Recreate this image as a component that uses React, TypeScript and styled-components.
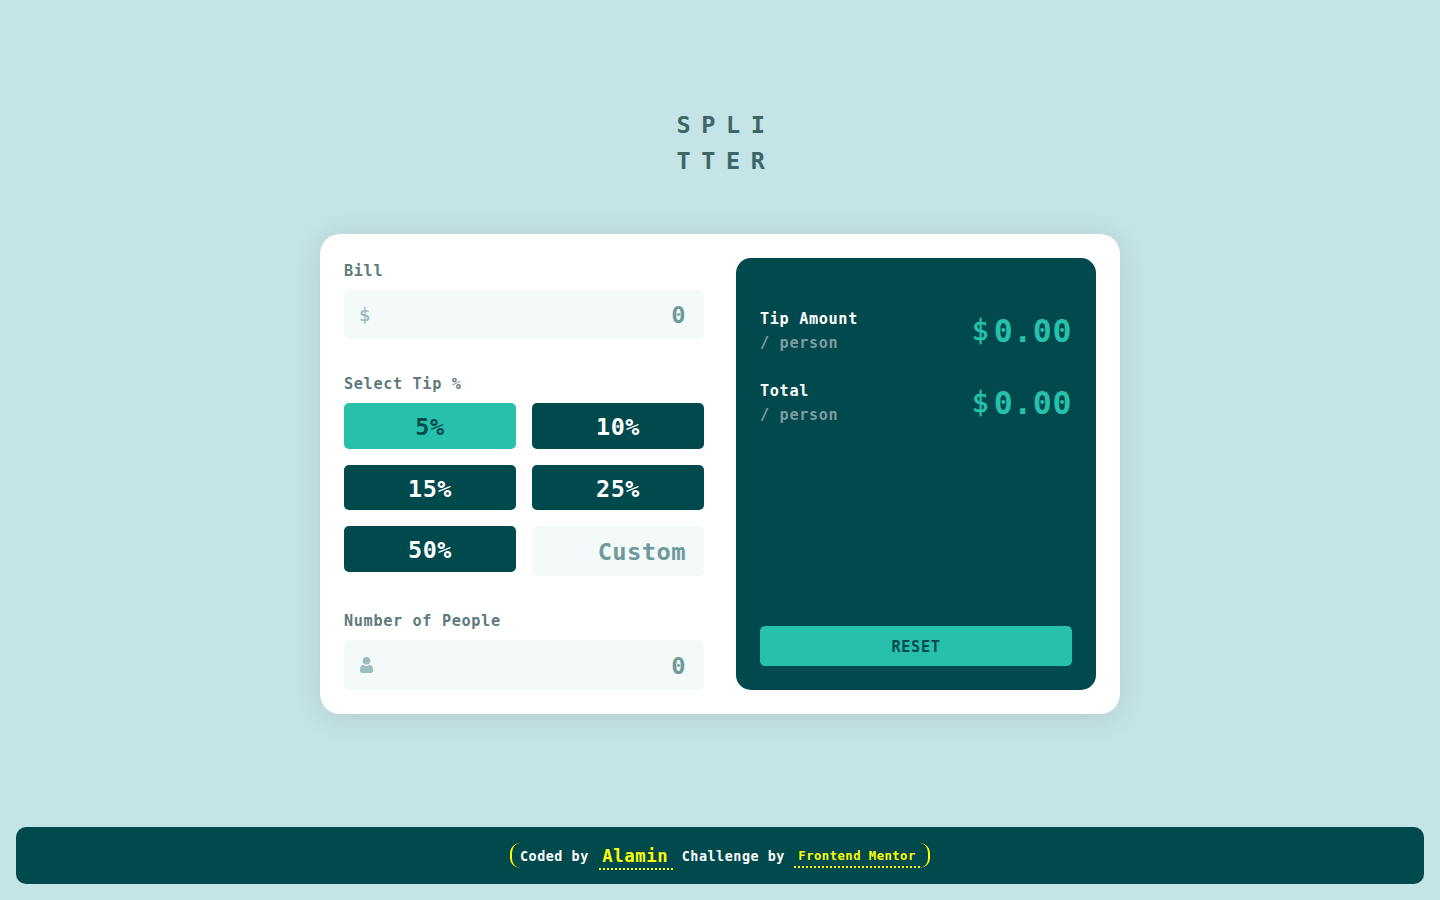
import React, { useState } from "react";
import styled, { createGlobalStyle } from "styled-components";

const GlobalStyle = createGlobalStyle`
  * { box-sizing: border-box; margin: 0; padding: 0; }
  body {
    background: #c5e4e7;
    font-family: "DejaVu Sans Mono", "Liberation Mono", monospace;
    font-weight: 700;
    letter-spacing: 0.0421em;
  }
  input, button { font: inherit; letter-spacing: inherit; border: none; outline: none; }
`;

const Page = styled.div`
  display: flex;
  flex-direction: column;
  align-items: center;
  min-height: 100vh;
  padding: 107px 16px 16px;
`;

const Logo = styled.h1`
  width: 89px;
  margin-left: 2px;
  margin-bottom: 55px;
  font-size: 23.5px;
  line-height: 36px;
  letter-spacing: 10.6px;
  color: #3d6666;
  white-space: nowrap;
`;

const Card = styled.main`
  display: grid;
  grid-template-columns: 360px 360px;
  gap: 32px;
  width: 800px;
  height: 480px;
  padding: 24px;
  border-radius: 20px;
  background: #fff;
  box-shadow: 0 3px 30px rgba(0, 0, 0, 0.1);
`;

const Form = styled.form`
  display: flex;
  flex-direction: column;
  gap: 32px;
`;

const Field = styled.div`
  display: flex;
  flex-direction: column;
  gap: 8px;
`;

const Label = styled.label`
  height: 24px;
  font-size: 15.2px;
  letter-spacing: 0.65px;
  line-height: 26px;
  color: #5e7a7d;
`;

const InputBox = styled.div<{ $height: number }>`
  display: flex;
  align-items: center;
  height: ${(p) => p.$height}px;
  padding: 0 18px 0 16px;
  border-radius: 5px;
  background: #f4fafa;
`;

const Input = styled.input<{ $low?: boolean }>`
  flex: 1;
  min-width: 0;
  width: 100%;
  height: 36px;
  padding-top: ${(p) => (p.$low ? 2 : 0)}px;
  background: transparent;
  text-align: right;
  font-size: 23.8px;
  letter-spacing: 0.4px;
  color: #00494d;
  &::placeholder { color: #70999c; opacity: 1; }
`;

const BillSign = styled.span`
  margin-left: -1px;
  font-weight: 400;
  font-size: 18.5px;
  line-height: 24px;
  letter-spacing: 0;
  color: #9ebbbd;
  -webkit-text-stroke: 0.4px #9ebbbd;
`;

const TipGrid = styled.div`
  display: grid;
  grid-template-columns: 1fr 1fr;
  grid-template-rows: 46px 45px 50px;
  gap: 16px;
  align-items: start;
`;

const TipButton = styled.button<{ $active: boolean; $height: number }>`
  height: ${(p) => p.$height}px;
  border-radius: 5px;
  font-size: 23.4px;
  letter-spacing: 0.6px;
  line-height: 36px;
  padding-top: 2px;
  background: ${(p) => (p.$active ? "#26c0ab" : "#00494d")};
  color: ${(p) => (p.$active ? "#00494d" : "#fff")};
`;

const Results = styled.section`
  display: flex;
  flex-direction: column;
  gap: 24px;
  padding: 48px 24px 24px;
  border-radius: 15px;
  background: #00494d;
`;

const ResultRow = styled.div`
  display: flex;
  justify-content: space-between;
  align-items: center;
  height: 48px;
`;

const ResultName = styled.p`
  height: 48px;
  padding-top: 1px;
  font-size: 15.2px;
  letter-spacing: 0.65px;
  line-height: 24px;
  color: #fff;
`;

const PerPerson = styled.span`
  display: block;
  color: #7f9c9f;
`;

const Amount = styled.p`
  display: flex;
  align-items: center;
  height: 48px;
  padding-top: 2px;
  font-size: 31.6px;
  letter-spacing: 0.56px;
  color: #26c0ab;
`;

const AmountSign = styled.span`
  margin: -2px 5px 0 0;
  font-weight: 400;
  font-size: 27.5px;
  letter-spacing: 0;
  -webkit-text-stroke: 0.7px #26c0ab;
`;

const ResetButton = styled.button`
  height: 40px;
  margin-top: auto;
  padding-top: 2px;
  border-radius: 5px;
  background: #26c0ab;
  color: #00494d;
  font-size: 15.2px;
`;

const Footer = styled.footer`
  display: flex;
  justify-content: center;
  align-items: flex-start;
  width: 100%;
  height: 57px;
  margin-top: auto;
  padding-top: 16px;
  border-radius: 10px;
  background: #00494d;
`;

const Credits = styled.p`
  display: flex;
  align-items: flex-start;
  width: 420px;
  height: 25px;
  padding-left: 8px;
  border: solid #ff0;
  border-width: 0 2px;
  border-radius: 10px;
  font-size: 13.4px;
  letter-spacing: 0.53px;
  line-height: 27px;
  color: #fff;
  white-space: nowrap;
`;

const CreditLink = styled.a<{ $large?: boolean }>`
  width: ${(p) => (p.$large ? 74 : 126)}px;
  height: ${(p) => (p.$large ? 27 : 25)}px;
  padding-left: ${(p) => (p.$large ? 3.5 : 4)}px;
  margin: ${(p) => (p.$large ? "0 9px 0 10px" : "0 0 0 9.5px")};
  border-bottom: 2px dotted #ff0;
  color: #ff0;
  font-size: ${(p) => (p.$large ? 17.3 : 12.2)}px;
  letter-spacing: ${(p) => (p.$large ? 0.6 : 0.49)}px;
  line-height: 26px;
`;

const PersonIcon = () => (
  <svg width="13" height="16" viewBox="0 0 13 16" fill="#9ebbbd" aria-hidden="true">
    <circle cx="6.5" cy="3.8" r="3.8" />
    <path d="M3 7.8Q6.5 10.3 10 7.8C12 8.4 13 10.2 13 12.4V14Q13 16 11 16H2Q0 16 0 14V12.4C0 10.2 1 8.4 3 7.8Z" />
  </svg>
);

const tips = [5, 10, 15, 25, 50];

export default function App() {
  const [tip, setTip] = useState(5);
  const [bill, setBill] = useState("");
  const [people, setPeople] = useState("");
  const [custom, setCustom] = useState("");

  const rate = custom ? Number(custom) : tip;
  const count = Number(people);
  const tipAmount = count > 0 ? (Number(bill) * rate) / 100 / count : 0;
  const total = count > 0 ? Number(bill) / count + tipAmount : 0;

  const reset = () => {
    setTip(5);
    setBill("");
    setPeople("");
    setCustom("");
  };

  return (
    <>
      <GlobalStyle />
      <Page>
        <Logo>SPLI<br />TTER</Logo>
        <Card>
          <Form>
            <Field>
              <Label htmlFor="bill">Bill</Label>
              <InputBox $height={49}>
                <BillSign>$</BillSign>
                <Input id="bill" placeholder="0" value={bill} onChange={(e) => setBill(e.target.value)} />
              </InputBox>
            </Field>
            <Field>
              <Label as="p">Select Tip %</Label>
              <TipGrid>
                {tips.map((t) => (
                  <TipButton
                    key={t}
                    type="button"
                    $active={t === tip}
                    $height={t === 15 || t === 25 ? 45 : 46}
                    onClick={() => setTip(t)}
                  >
                    {t}%
                  </TipButton>
                ))}
                <InputBox $height={50}>
                  <Input $low placeholder="Custom" value={custom} onChange={(e) => setCustom(e.target.value)} />
                </InputBox>
              </TipGrid>
            </Field>
            <Field>
              <Label htmlFor="people">Number of People</Label>
              <InputBox $height={50}>
                <PersonIcon />
                <Input $low id="people" placeholder="0" value={people} onChange={(e) => setPeople(e.target.value)} />
              </InputBox>
            </Field>
          </Form>
          <Results>
            <ResultRow>
              <ResultName>Tip Amount<PerPerson>/ person</PerPerson></ResultName>
              <Amount><AmountSign>$</AmountSign>{tipAmount.toFixed(2)}</Amount>
            </ResultRow>
            <ResultRow>
              <ResultName>Total<PerPerson>/ person</PerPerson></ResultName>
              <Amount><AmountSign>$</AmountSign>{total.toFixed(2)}</Amount>
            </ResultRow>
            <ResetButton type="button" onClick={reset}>RESET</ResetButton>
          </Results>
        </Card>
        <Footer>
          <Credits>
            <span>Coded by</span>
            <CreditLink $large>Alamin</CreditLink>
            <span>Challenge by</span>
            <CreditLink>Frontend Mentor</CreditLink>
          </Credits>
        </Footer>
      </Page>
    </>
  );
}
